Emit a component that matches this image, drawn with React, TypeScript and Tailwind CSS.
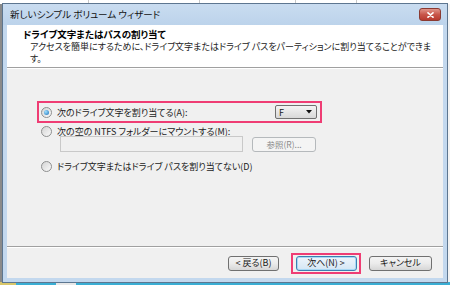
import React from 'react';

function Radio({ checked }: { checked?: boolean }) {
  return (
    <span className="flex h-[11px] w-[11px] shrink-0 items-center justify-center rounded-full border border-[#8e8f8f] bg-linear-to-br from-[#d4d4d4] to-[#fafafa]">
      {checked && (
        <span className="h-[5px] w-[5px] rounded-full bg-[radial-gradient(circle_at_35%_35%,#9ee0ff,#1c6fb8)]" />
      )}
    </span>
  );
}

function WinButton({ children, primary }: { children: React.ReactNode; primary?: boolean }) {
  return (
    <div
      className={
        primary
          ? 'flex h-[15px] w-[61px] items-center justify-center rounded-[3px] border border-[#3c7fb1] bg-linear-to-b from-[#eef5fb] to-[#d4e6f5] text-[9px] shadow-[inset_0_0_0_1px_#a8d8f5]'
          : 'flex h-[15px] items-center justify-center rounded-[3px] border border-[#707070] bg-linear-to-b from-[#f4f4f4] via-[#ebebeb] to-[#d6d6d6] text-[9px]'
      }
    >
      {children}
    </div>
  );
}

export default function App() {
  return (
    <div className="relative h-[285px] w-[450px] overflow-hidden bg-[#f3f3f3] font-['Noto_Sans_CJK_JP','Noto_Sans',sans-serif] text-[#1a1a1a] [font-feature-settings:'palt']">
      {/* bits of the windows behind */}
      <div className="absolute left-0 top-0 flex h-[4px] w-[450px] bg-white">
        <span className="ml-[88px] h-full w-px bg-[#c8c8c8]" />
        <span className="ml-[110px] h-full w-px bg-[#c8c8c8]" />
        <span className="ml-[95px] h-full w-px bg-[#c8c8c8]" />
        <span className="ml-[60px] h-full w-px bg-[#c8c8c8]" />
      </div>
      <div className="absolute bottom-0 left-0 flex h-[3px] w-[450px] bg-[#3aaed4]">
        <span className="h-full w-[16px] bg-[#d9c76a]" />
        <span className="ml-[40px] h-full w-[20px] bg-[#e8e8e8]" />
      </div>
      <div className="absolute left-0 top-[4px] h-[278px] w-[2px] bg-[#8a8a8a]" />

      {/* window */}
      <div className="absolute left-[2px] top-[3px] flex h-[280px] w-[446px] flex-col border border-[#5d7690] bg-[#c3d8ee]">
        {/* title bar */}
        <div className="flex h-[21px] shrink-0 items-center justify-between bg-linear-to-b from-[#c9dcf0] to-[#bcd3eb] pl-[7px] pr-[6px]">
          <span className="text-[9.5px] leading-none text-[#111]">新しいシンプル ボリューム ウィザード</span>
          <div className="flex h-[13px] w-[22px] items-center justify-center rounded-[3px] border border-[#8a3a32] bg-linear-to-b from-[#e0948a] via-[#c8564a] to-[#b8392e]">
            <svg width="7" height="6" viewBox="0 0 7 6">
              <path d="M1 0.8 L6 5.2 M6 0.8 L1 5.2" stroke="#fff" strokeWidth="1.6" strokeLinecap="round" />
            </svg>
          </div>
        </div>

        {/* client area */}
        <div className="mx-[4px] mb-[4px] flex flex-1 flex-col bg-[#f0f0f0]">
          {/* header */}
          <div className="h-[42px] shrink-0 bg-white pl-[16px] pt-[3px]">
            <div className="text-[9.5px] font-bold leading-[13px] text-black">ドライブ文字またはパスの割り当て</div>
            <div className="whitespace-nowrap pl-[7px] text-[9px] leading-[12px] text-[#222]">
              <div>アクセスを簡単にするために、ドライブ文字またはドライブ パスをパーティションに割り当てることができま</div>
              <div>す。</div>
            </div>
          </div>
          <div className="h-px bg-[#a0a0a0]" />
          <div className="h-px bg-white" />

          {/* options */}
          <div className="flex flex-1 flex-col pl-[30px] pt-[32px] text-[9px] leading-none">
            <div className="flex h-[22px] w-[285px] items-center border-2 border-[#ef3d74] pl-[2px] pr-[3px]">
              <Radio checked />
              <span className="ml-[5px] flex-1">次のドライブ文字を割り当てる(A):</span>
              <div className="flex h-[14px] w-[42px] items-center justify-between rounded-[2px] border border-[#707070] bg-linear-to-b from-[#f4f4f4] to-[#d8d8d8] pl-[3px] pr-[4px]">
                <span className="text-[9px]">F</span>
                <svg width="6" height="4" viewBox="0 0 6 4">
                  <path d="M0 0 H6 L3 3.5 Z" fill="#111" />
                </svg>
              </div>
            </div>

            <div className="mt-[3px] flex h-[10px] items-center pl-[4px]">
              <Radio />
              <span className="ml-[5px]">次の空の NTFS フォルダーにマウントする(M):</span>
            </div>
            <div className="flex items-center pl-[23px]">
              <div className="h-[16px] w-[183px] border border-[#c9c9c9] bg-[#f0f0f0]" />
              <div className="ml-[9px] flex h-[15px] w-[64px] items-center justify-center rounded-[3px] border border-[#b5b9bc] bg-[#f4f4f4] text-[8.5px] text-[#8a8a8a]">
                参照(R)...
              </div>
            </div>

            <div className="mt-[9px] flex h-[10px] items-center pl-[4px]">
              <Radio />
              <span className="ml-[5px]">ドライブ文字またはドライブ パスを割り当てない(D)</span>
            </div>
          </div>

          <div className="h-px bg-[#a0a0a0]" />
          <div className="h-px bg-white" />

          {/* buttons */}
          <div className="flex h-[30px] shrink-0 items-center pl-[221px]">
            <div className="w-[51px]">
              <WinButton>&lt; 戻る(B)</WinButton>
            </div>
            <div className="ml-[12px] flex h-[21px] w-[70px] items-center justify-center border-2 border-[#ef3d74]">
              <WinButton primary>次へ(N) &gt;</WinButton>
            </div>
            <div className="ml-[8px] w-[63px]">
              <WinButton>キャンセル</WinButton>
            </div>
          </div>
        </div>
      </div>
    </div>
  );
}
